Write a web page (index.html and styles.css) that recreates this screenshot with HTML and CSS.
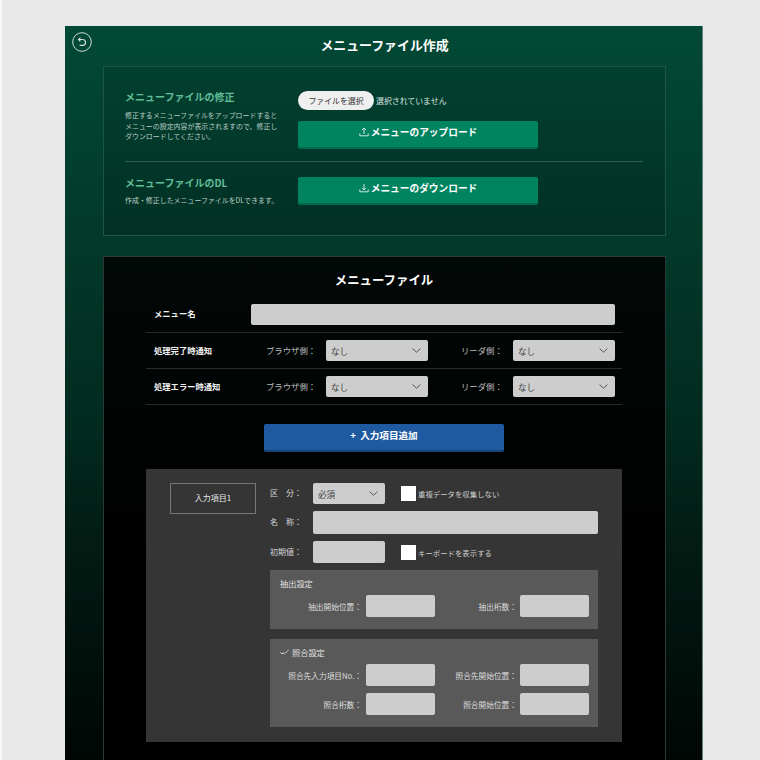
FILE: index.html
```html
<!DOCTYPE html>
<html lang="ja">
<head>
<meta charset="UTF-8">
<meta name="viewport" content="width=device-width, initial-scale=1.0">
<link rel="stylesheet" href="styles.css">
<title>メニューファイル作成</title>
</head>
<body>
<div class="panel">
    <div class="panel-head">
        <a class="back-btn" href="#" aria-label="戻る">
            <svg width="20" height="20" viewBox="0 0 20 20" fill="none" stroke="#cfe0da" stroke-width="1">
                <circle cx="10" cy="10" r="9.3"/>
                <path d="M8.4 5.6 6.5 7.5l1.9 1.9" stroke-width="1.2"/>
                <path d="M6.7 7.5h3.9a2.9 2.9 0 0 1 0 5.8H7.6" stroke-width="1.2"/>
            </svg>
        </a>
        <h1>メニューファイル作成</h1>
    </div>

    <div class="file-card">
        <div class="file-row file-row-first">
            <div class="file-info">
                <h2>メニューファイルの修正</h2>
                <p>修正するメニューファイルをアップロードすると<br>メニューの設定内容が表示されますので、修正し<br>ダウンロードしてください。</p>
            </div>
            <div class="file-actions">
                <div class="file-picker">
                    <button class="file-btn">ファイルを選択</button>
                    <span>選択されていません</span>
                </div>
                <button class="btn btn-green">
                    <svg width="10" height="10" viewBox="0 0 10 10" fill="none" stroke="#e8f3ef" stroke-width="0.9">
                        <path d="M5 7V1.2M3 3.1l2-2 2 2M.8 6.4v2.4h8.4V6.4"/>
                    </svg>
                    メニューのアップロード
                </button>
            </div>
        </div>
        <div class="file-row">
            <div class="file-info">
                <h2>メニューファイルのDL</h2>
                <p>作成・修正したメニューファイルをDLできます。</p>
            </div>
            <div class="file-actions">
                <button class="btn btn-green">
                    <svg width="10" height="10" viewBox="0 0 10 10" fill="none" stroke="#e8f3ef" stroke-width="0.9">
                        <path d="M5 1v5.8M3 4.9l2 2 2-2M.8 6.4v2.4h8.4V6.4"/>
                    </svg>
                    メニューのダウンロード
                </button>
            </div>
        </div>
    </div>

    <div class="menu-card">
        <h2 class="menu-title">メニューファイル</h2>

        <div class="menu-rows">
            <div class="menu-row menu-row-name">
                <span class="row-label">メニュー名</span>
                <input class="field" type="text">
            </div>
            <div class="menu-row">
                <span class="row-label">処理完了時通知</span>
                <span class="side-label side-browser">ブラウザ側：</span>
                <div class="select select-wide">なし<svg class="chev" width="9" height="5" viewBox="0 0 9 5"><path d="M.6.6 4.5 4.2 8.4.6"/></svg></div>
                <span class="side-label side-reader">リーダ側：</span>
                <div class="select select-wide">なし<svg class="chev" width="9" height="5" viewBox="0 0 9 5"><path d="M.6.6 4.5 4.2 8.4.6"/></svg></div>
            </div>
            <div class="menu-row">
                <span class="row-label">処理エラー時通知</span>
                <span class="side-label side-browser">ブラウザ側：</span>
                <div class="select select-wide">なし<svg class="chev" width="9" height="5" viewBox="0 0 9 5"><path d="M.6.6 4.5 4.2 8.4.6"/></svg></div>
                <span class="side-label side-reader">リーダ側：</span>
                <div class="select select-wide">なし<svg class="chev" width="9" height="5" viewBox="0 0 9 5"><path d="M.6.6 4.5 4.2 8.4.6"/></svg></div>
            </div>
        </div>

        <button class="btn btn-blue">+ 入力項目追加</button>

        <div class="item-block">
            <div class="item-name">入力項目1</div>
            <div class="item-body">
                <div class="item-row item-row-kind">
                    <span class="item-label">区　分：</span>
                    <div class="select select-short">必須<svg class="chev" width="9" height="5" viewBox="0 0 9 5"><path d="M.6.6 4.5 4.2 8.4.6"/></svg></div>
                    <label class="check"><input type="checkbox">重複データを収集しない</label>
                </div>
                <div class="item-row item-row-title">
                    <span class="item-label">名　称：</span>
                    <input class="field field-full" type="text">
                </div>
                <div class="item-row item-row-init">
                    <span class="item-label">初期値：</span>
                    <input class="field field-short" type="text">
                    <label class="check"><input type="checkbox">キーボードを表示する</label>
                </div>

                <div class="setting-box setting-extract">
                    <div class="setting-title">抽出設定</div>
                    <div class="setting-grid">
                        <span class="setting-label">抽出開始位置：</span>
                        <input class="field" type="text">
                        <span class="setting-label">抽出桁数：</span>
                        <input class="field" type="text">
                    </div>
                </div>

                <div class="setting-box setting-match">
                    <div class="setting-title">
                        <svg width="9" height="6" viewBox="0 0 9 6" fill="none" stroke="#d8d8d8" stroke-width="0.9">
                            <path d="M.3 3.3 2 5l1.4-1.4M3 3.6 4.2 5 8.7 1"/>
                        </svg>
                        照合設定
                    </div>
                    <div class="setting-grid">
                        <span class="setting-label">照合先入力項目No.：</span>
                        <input class="field" type="text">
                        <span class="setting-label">照合先開始位置：</span>
                        <input class="field" type="text">
                        <span class="setting-label">照合桁数：</span>
                        <input class="field" type="text">
                        <span class="setting-label">照合開始位置：</span>
                        <input class="field" type="text">
                    </div>
                </div>
            </div>
        </div>
    </div>
</div>
</body>
</html>
```

FILE: styles.css
```css
* {
    box-sizing: border-box;
}

html {
    background-color: #e9e9e9;
}

body {
    margin: 0;
    padding: 26px 57px 0 63px;
    font-family: "Noto Sans CJK JP", "Noto Sans", sans-serif;
    color: #fff;
    background-color: #e9e9e9;
    border-left: 2px solid #f8f8f8;
    height: 760px;
    overflow: hidden;
}

h1, h2, p {
    margin: 0;
}

input, button {
    font-family: inherit;
    margin: 0;
}

.panel {
    height: 734px;
    padding: 0 36px 0 38px;
    background: linear-gradient(#024935 0, #023a2a 204px, #022a1f 404px, #021d15 504px, #000605 734px);
    border-right: 1px solid #5f8377;
}

.panel-head {
    position: relative;
    height: 40px;
    display: flex;
    align-items: center;
    justify-content: center;
}

.panel-head h1 {
    font-size: 12.9px;
    line-height: 38px;
    height: 40px;
    font-weight: 700;
}

.back-btn {
    position: absolute;
    left: -31px;
    top: 6px;
    width: 20px;
    height: 20px;
    display: block;
}

.back-btn svg {
    display: block;
}

.file-card {
    height: 170px;
    padding: 0 22px 0 21px;
    background: linear-gradient(#024030, #013024);
    border: 1px solid #1f5443;
}

.file-row {
    display: flex;
    height: 73px;
    padding-top: 15px;
}

.file-row-first {
    height: 95px;
    padding-top: 24px;
    border-bottom: 1px solid #2b5f4f;
}

.file-info {
    width: 173px;
    flex-shrink: 0;
}

.file-info h2 {
    font-size: 10px;
    line-height: 14px;
    font-weight: 700;
    color: #62bd9a;
    margin-top: -1px;
    margin-bottom: 5px;
}

.file-row-first .file-info h2 {
    margin-bottom: 6px;
}

.file-info p {
    font-size: 6.95px;
    line-height: 10.5px;
    color: #b9cdc6;
}

.file-actions {
    width: 240px;
}

.file-picker {
    display: flex;
    align-items: center;
    gap: 2px;
    margin-bottom: 11px;
    font-size: 7.9px;
    color: #dce6e2;
}

.file-btn {
    width: 76px;
    height: 19px;
    padding: 0;
    border: none;
    border-radius: 10px;
    background-color: #efefef;
    color: #333;
    font-size: 7.9px;
}

.btn {
    display: flex;
    align-items: center;
    justify-content: center;
    gap: 2px;
    width: 240px;
    padding: 0 0 4px;
    border: none;
    border-radius: 2px;
    color: #fff;
    font-weight: 700;
}

.btn-green {
    height: 28px;
    font-size: 9.7px;
    background-color: #00835f;
    border-bottom: 2px solid #006a4d;
}

.btn-blue {
    height: 28px;
    margin: 19px auto 17px;
    font-size: 9.6px;
    word-spacing: 2px;
    gap: 0;
    background-color: #1f5aa0;
    border-bottom: 2px solid #174579;
}

.menu-card {
    height: 504px;
    margin-top: 20px;
    padding: 0 43px 0 42px;
    background: linear-gradient(#020807, #000 60%);
    border: 1px solid #2c3a35;
    border-bottom: none;
}

.menu-title {
    font-size: 12.4px;
    line-height: 47px;
    text-align: center;
    font-weight: 700;
}

.menu-rows {
    font-size: 8.3px;
}

.menu-row {
    display: flex;
    align-items: center;
    height: 36px;
    padding: 0 7px 0 8px;
    border-bottom: 1px solid #2a2a2a;
}

.menu-row-name {
    height: 29px;
    padding-bottom: 8px;
}

.row-label {
    width: 97px;
    flex-shrink: 0;
    font-weight: 700;
    color: #f0f0f0;
    white-space: nowrap;
    margin-top: -2px;
}

.menu-row:not(.menu-row-name) .row-label {
    width: 112px;
}

.side-label {
    color: #bdbdbd;
    white-space: nowrap;
    margin-top: -2px;
    font-size: 8.4px;
}

.side-browser {
    width: 60px;
}

.side-reader {
    width: 52px;
    margin-left: 33px;
}

.menu-row-name .field {
    width: 364px;
    height: 21px;
}

.field {
    display: block;
    padding: 0 6px;
    border: none;
    border-radius: 2px;
    background-color: #cdcdcd;
}

.select {
    display: flex;
    align-items: center;
    justify-content: space-between;
    flex-shrink: 0;
    height: 21px;
    padding: 0 7px 0 5px;
    border-radius: 2px;
    background-color: #cdcdcd;
    color: #444;
    font-size: 8.6px;
}

.select-wide {
    width: 102px;
}

.select-short {
    width: 72px;
}

.chev {
    fill: none;
    stroke: #555;
    stroke-width: 1;
}

.item-block {
    display: flex;
    height: 273px;
    padding: 14px 24px 0;
    background-color: #353535;
}

.item-name {
    flex-shrink: 0;
    width: 86px;
    height: 31px;
    margin-right: 14px;
    border: 1px solid #777;
    font-size: 8px;
    line-height: 28px;
    text-align: center;
    color: #e4e4e4;
}

.item-body {
    width: 328px;
    font-size: 8px;
    color: #d8d8d8;
}

.item-row {
    display: flex;
    align-items: center;
}

.item-row-kind {
    height: 21px;
    margin-bottom: 7px;
}

.item-row-title {
    height: 23px;
    margin-bottom: 7px;
}

.item-row-init {
    height: 22px;
    margin-bottom: 7px;
}

.item-label {
    width: 43px;
    flex-shrink: 0;
    white-space: nowrap;
    margin-top: -2px;
}

.field-full {
    width: 285px;
    height: 23px;
}

.field-short {
    width: 72px;
    height: 22px;
}

.check {
    display: flex;
    align-items: center;
    gap: 2px;
    margin-left: 16px;
    font-size: 7.4px;
    color: #cfcfcf;
}

.check input {
    appearance: none;
    width: 15px;
    height: 15px;
    margin: 0;
    background-color: #fff;
}

.setting-box {
    padding: 7px 10px 0;
    background-color: #595959;
}

.setting-extract {
    height: 59px;
    margin-bottom: 10px;
}

.setting-match {
    height: 88px;
}

.setting-title {
    display: flex;
    align-items: center;
    gap: 3px;
    height: 12px;
    margin-bottom: 6px;
    font-size: 8.2px;
    color: #e2e2e2;
}

.setting-title svg {
    flex-shrink: 0;
}

.setting-grid {
    display: grid;
    grid-template-columns: 86px 69px 85px 69px;
    row-gap: 7px;
    align-items: center;
}

.setting-grid .field {
    height: 22px;
    width: 69px;
}

.setting-label {
    padding-right: 4px;
    text-align: right;
    font-size: 7.7px;
    white-space: nowrap;
    color: #dcdcdc;
}

.setting-grid .setting-label:nth-child(4n+3) {
    padding-right: 3px;
}
```
